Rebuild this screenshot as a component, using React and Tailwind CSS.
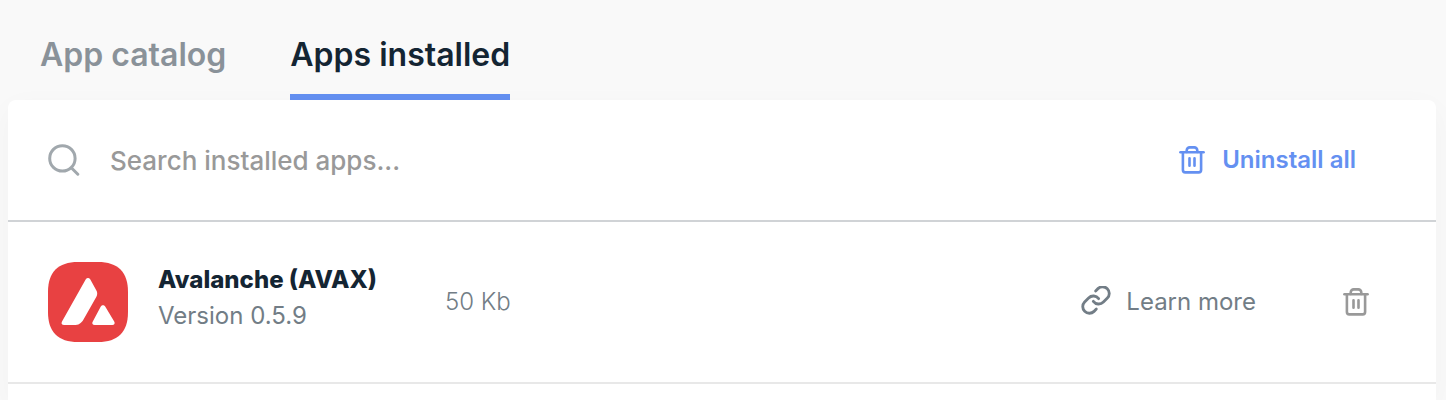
const TrashIcon = ({ className }) => (
  <svg viewBox="0 0 32 32" fill="none" stroke="currentColor" strokeWidth="2.6" strokeLinecap="round" strokeLinejoin="round" className={className} aria-hidden="true">
    <path d="M4.4 8.2h23.2" />
    <path d="M6.9 8.4V26a2.4 2.4 0 0 0 2.4 2.4h13.4a2.4 2.4 0 0 0 2.4-2.4V8.4" />
    <path d="M10.7 8V6.4a3 3 0 0 1 3-3h4.6a3 3 0 0 1 3 3V8" />
    <path d="M13.5 14.2v7.6M18.5 14.2v7.6" />
  </svg>
);

const SearchIcon = ({ className }) => (
  <svg viewBox="0 0 32 32" fill="none" stroke="currentColor" strokeWidth="3" strokeLinecap="round" className={className} aria-hidden="true">
    <circle cx="14.4" cy="14.4" r="12.7" />
    <path d="M23.8 24.2l6 6" />
  </svg>
);

const LinkIcon = ({ className }) => (
  <svg viewBox="0 1.5 24 24" fill="none" stroke="currentColor" strokeWidth="2.1" strokeLinecap="round" strokeLinejoin="round" className={className} aria-hidden="true">
    <path d="M10 13a5 5 0 0 0 7.54.54l3-3a5 5 0 0 0-7.07-7.07l-1.72 1.71" />
    <path d="M14 11a5 5 0 0 0-7.54-.54l-3 3a5 5 0 0 0 7.07 7.07l1.71-1.71" />
  </svg>
);

const AvalancheLogo = ({ className }) => (
  <svg viewBox="0 0 80 80" className={className} role="img" aria-label="Avalanche">
    <path fill="#e84142" d="M0 30C0 10 10 0 30 0h20c20 0 30 10 30 30v20c0 20-10 30-30 30H30C10 80 0 70 0 50z" />
    <path fill="#fff" d="M37.8 17.200c1.100-1.700 3.300-1.700 4.400 0l6.200 11.300c1.100 2 1.100 4.200 0 6.200L35.500 57.500c-2.400 4-5 5.600-9.500 5.600H16.200c-2.400 0-3.300-1.600-2.200-3.600z" />
    <path fill="#fff" d="M52.800 44.600c1.100-1.800 3.300-1.800 4.400 0l9 15c1.100 1.900.2 3.500-2 3.500H46.800c-2.300 0-3.200-1.600-2-3.500z" />
  </svg>
);

const apps = [{ name: "Avalanche (AVAX)", version: "0.5.9", size: "50 Kb" }];

export default function App() {
  return (
    <main className="flex h-screen flex-col overflow-hidden bg-[#f9f9f9] pr-[10px] pl-2 font-['Inter',sans-serif] text-[#142533]">
      <nav className="flex shrink-0 gap-16 pl-8 text-[32px] leading-10 font-semibold">
        <button type="button" className="border-b-6 border-transparent pt-[35px] pb-[19px] text-[#8a9299]">App catalog</button>
        <button type="button" aria-current="page" className="border-b-6 border-[#6490f1] pt-[35px] pb-[19px]">Apps installed</button>
      </nav>
      <section className="grow rounded-t-lg bg-white shadow-[0_8px_30px_rgba(0,0,0,0.03)]">
        <div className="flex h-[122px] items-center border-b-2 border-[#d0d3d6] pr-20 pl-10">
          <label htmlFor="search" className="text-[#a1a8ad]">
            <SearchIcon className="size-8" />
          </label>
          <input id="search" type="text" aria-label="Search installed apps" placeholder="Search installed apps..." className="ml-[30px] min-w-0 grow pt-[2px] text-[26px] leading-8 font-medium outline-none placeholder:text-[#999999]" />
          <button type="button" className="flex items-center gap-[14px] text-2xl font-semibold text-[#6490f1]">
            <TrashIcon className="size-8" />
            Uninstall all
          </button>
        </div>
        <ul>
          {apps.map((app) => (
            <li key={app.name} className="flex h-[162px] items-center border-b-2 border-[#e8e8e8] pr-16 pl-10 text-2xl text-[#727d86]">
              <AvalancheLogo className="size-20 shrink-0" />
              <div className="ml-[30px] w-[287px] pb-2">
                <h2 className="leading-9 font-extrabold text-[#142533]">{app.name}</h2>
                <p className="leading-9">Version {app.version}</p>
              </div>
              <p className="grow font-light">{app.size}</p>
              <a href="#learn-more" className="flex items-center gap-[14px]">
                <LinkIcon className="size-8" />
                Learn more
              </a>
              <button type="button" aria-label={`Uninstall ${app.name}`} className="ml-[84px] text-[#999999]">
                <TrashIcon className="size-8" />
              </button>
            </li>
          ))}
        </ul>
      </section>
    </main>
  );
}
